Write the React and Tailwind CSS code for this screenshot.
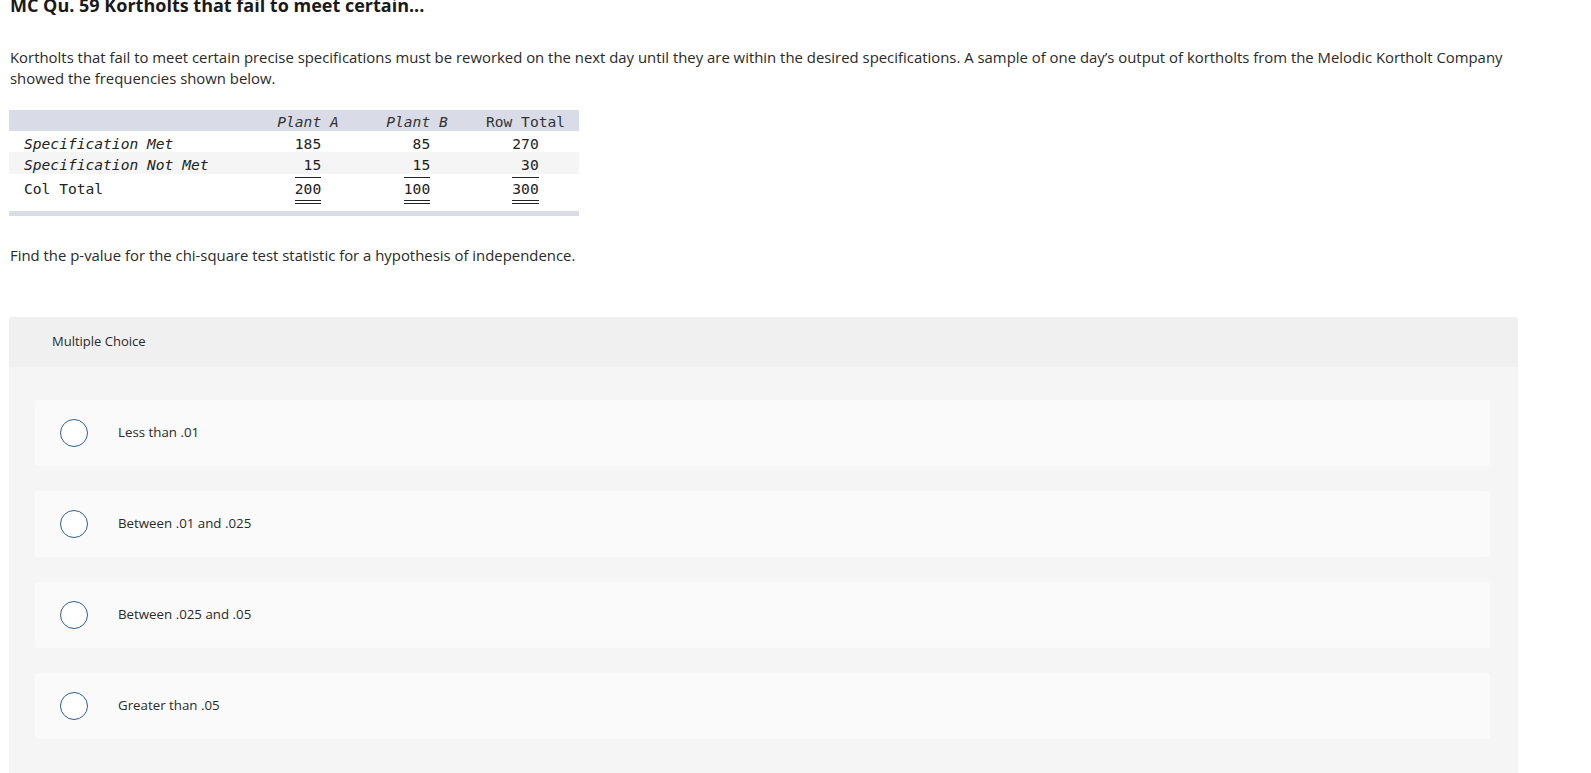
import React from "react";

const rows = [
  { label: "Specification Met", italic: true, vals: ["185", " 85", "270"], bg: "bg-white", h: "h-[21px]" },
  { label: "Specification Not Met", italic: true, vals: [" 15", " 15", " 30"], bg: "bg-[#f5f5f5]", h: "h-[22px]", under: true },
];

function Cell({ v, under, dbl }) {
  return (
    <div className="flex justify-center">
      <div className="relative">
        <span className="whitespace-pre">{v}</span>
        {under && <div className="absolute left-0 right-0 -bottom-[5px] h-px bg-[#222]" />}
        {dbl && (
          <div className="absolute left-0 right-0 top-[18px] flex flex-col gap-[2px]">
            <div className="h-px bg-[#222]" />
            <div className="h-px bg-[#222]" />
          </div>
        )}
      </div>
    </div>
  );
}

const cols = "grid grid-cols-[245px_108px_110px_107px] items-center";

function Table() {
  return (
    <div className="w-[570px] font-['DejaVu_Sans_Mono',monospace] text-[14.6px] text-[#222] leading-none">
      <div className={`${cols} h-[21px] pt-[4px] bg-[#d9dce6] text-[#333]`}>
        <div />
        <div className="text-center italic">Plant A</div>
        <div className="text-center italic">Plant B</div>
        <div className="text-center">Row Total</div>
      </div>
      {rows.map((r) => (
        <div key={r.label} className={`${cols} ${r.h} pt-[5px] ${r.bg}`}>
          <div className={`pl-[15px] ${r.italic ? "italic" : ""}`}>{r.label}</div>
          {r.vals.map((v, i) => (
            <Cell key={i} v={v} under={r.under} />
          ))}
        </div>
      ))}
      <div className={`${cols} h-[37px] bg-white items-start pt-[8px]`}>
        <div className="pl-[15px]">Col Total</div>
        {["200", "100", "300"].map((v, i) => (
          <Cell key={i} v={v} dbl />
        ))}
      </div>
      <div className="h-[5px] bg-[#d9dce6]" />
    </div>
  );
}

const options = ["Less than .01", "Between .01 and .025", "Between .025 and .05", "Greater than .05"];

export default function App() {
  return (
    <div className="min-h-[773px] bg-white pl-[9px] pr-[73px] font-['Open_Sans',sans-serif] text-[#2a2a2a] overflow-hidden">
      <div className="-mt-[7px] text-[18px] font-bold leading-[24px] text-[#1a1a1a] pl-px whitespace-nowrap">
        MC Qu. 59 Kortholts that fail to meet certain...
      </div>
      <p className="mt-[30px] text-[14.9px] leading-[21px] pl-px">
        Kortholts that fail to meet certain precise specifications must be reworked on the next day until they are within the desired specifications. A sample of one day’s output of kortholts from the Melodic Kortholt Company showed the frequencies shown below.
      </p>
      <div className="mt-[21px]">
        <Table />
      </div>
      <p className="mt-[29px] text-[14.9px] leading-[21px] pl-px">
        Find the p-value for the chi-square test statistic for a hypothesis of independence.
      </p>
      <div className="mt-[51px] rounded-t-[3px] bg-[#f5f5f5] pb-[40px]">
        <div className="h-[50px] bg-[#f0f0f0] rounded-t-[3px] flex items-center pl-[43px] text-[13px] text-[#2a2a2a]">
          Multiple Choice
        </div>
        <div className="pt-[33px] pl-[26px] pr-[28px] flex flex-col gap-[25px]">
          {options.map((o) => (
            <div key={o} className="h-[66px] bg-[#fafafa] rounded-[3px] flex items-center pl-[25px]">
              <div className="w-[28px] h-[28px] rounded-full border-[1.5px] border-[#2f5f90] bg-white shrink-0" />
              <div className="ml-[30px] text-[13.3px] text-[#2a2a2a]">{o}</div>
            </div>
          ))}
        </div>
      </div>
    </div>
  );
}
